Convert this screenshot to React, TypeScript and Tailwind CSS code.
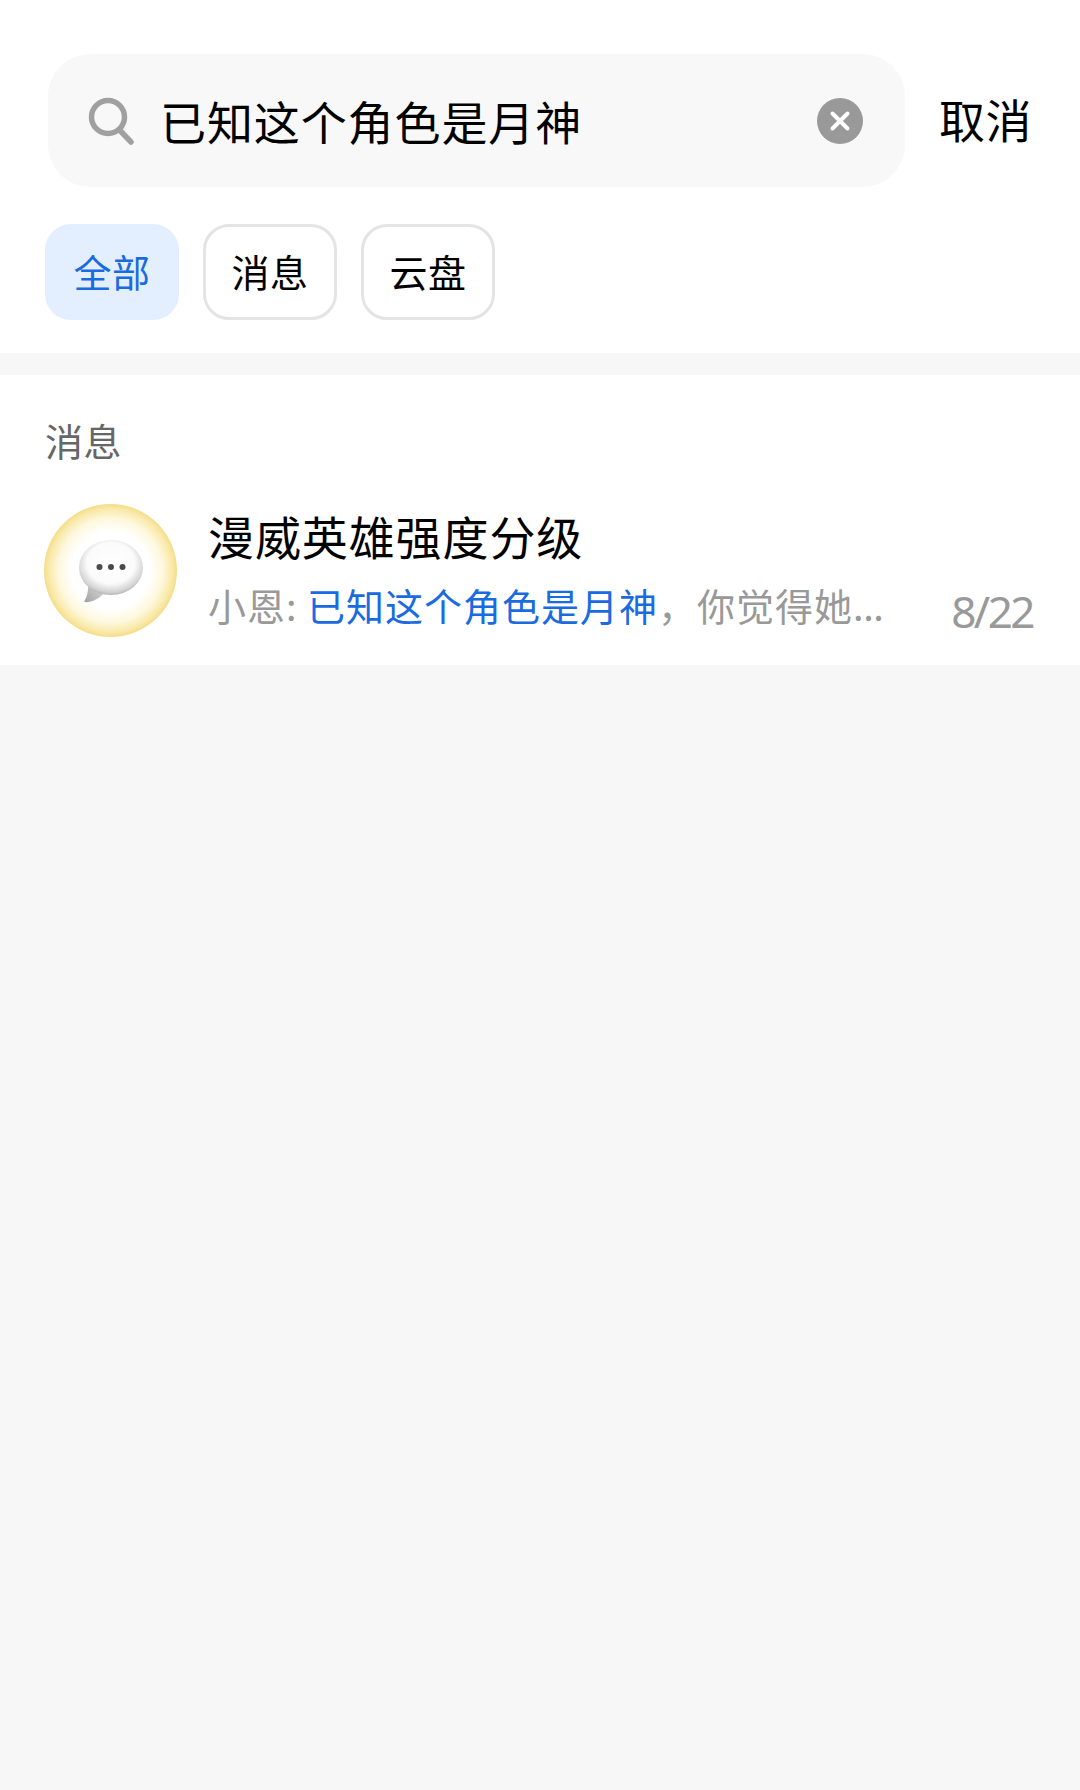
const font = { fontFamily: '"Noto Sans CJK SC", "Noto Sans", sans-serif' };

function Chip({ label, active }: { label: string; active?: boolean }) {
  return (
    <div
      className={
        active
          ? "flex h-[96px] w-[134px] items-center justify-center rounded-[26px] bg-[#e3eefe] text-[38px] leading-none tracking-[0.5px] text-[#1a6ae0]"
          : "flex h-[96px] w-[134px] items-center justify-center rounded-[26px] border-[3px] border-[#e4e4e4] bg-white text-[38px] leading-none tracking-[0.5px] text-black"
      }
    >
      <span className="-mt-[2px]">{label}</span>
    </div>
  );
}

function SearchIcon() {
  return (
    <svg width="46" height="48" viewBox="0 0 46 48" fill="none" className="shrink-0">
      <circle cx="20" cy="20" r="16.5" stroke="#a0a0a0" strokeWidth="5.5" />
      <path d="M31.5 33 L43 45" stroke="#a0a0a0" strokeWidth="5.5" strokeLinecap="round" />
    </svg>
  );
}

function ClearIcon() {
  return (
    <svg width="46" height="46" viewBox="0 0 46 46" className="shrink-0">
      <circle cx="23" cy="23" r="23" fill="#999999" />
      <path d="M15.5 15.5 L30.5 30.5 M30.5 15.5 L15.5 30.5" stroke="#ffffff" strokeWidth="4" strokeLinecap="round" />
    </svg>
  );
}

function Bubble() {
  return (
    <svg width="66" height="66" viewBox="0 0 66 66">
      <defs>
        <radialGradient id="bubbleFill" cx="50%" cy="42%" r="62%">
          <stop offset="0%" stopColor="#ffffff" />
          <stop offset="60%" stopColor="#fbfbfb" />
          <stop offset="85%" stopColor="#d2d2d2" />
          <stop offset="100%" stopColor="#9f9f9f" />
        </radialGradient>
        <linearGradient id="tailFill" x1="0" y1="1" x2="1" y2="0">
          <stop offset="0%" stopColor="#a0a0a0" />
          <stop offset="100%" stopColor="#e2e2e2" />
        </linearGradient>
      </defs>
      <path d="M10 43 C11 52 9 59 6 64 C13 65 21 61 26 55 Z" fill="url(#tailFill)" />
      <ellipse cx="33" cy="29.5" rx="32" ry="27.5" fill="url(#bubbleFill)" />
      <circle cx="21.5" cy="29" r="3" fill="#4a4a4a" />
      <circle cx="33" cy="29" r="3" fill="#4a4a4a" />
      <circle cx="44.5" cy="29" r="3" fill="#4a4a4a" />
    </svg>
  );
}

export default function App() {
  return (
    <div className="flex h-[1790px] w-[1080px] flex-col bg-[#f7f7f7]" style={font}>
      <header className="h-[353px] bg-white pt-[54px]">
        <div className="flex items-center pl-[48px]">
          <div className="flex h-[133px] w-[857px] items-center rounded-[42px] bg-[#f8f8f8] pl-[40px] pr-[42px]">
            <SearchIcon />
            <span className="ml-[26px] -mt-[2px] flex-1 text-[46px] leading-none tracking-[0.9px] text-black">已知这个角色是月神</span>
            <ClearIcon />
          </div>
          <span className="ml-[34px] -mt-[6px] text-[46px] leading-none tracking-[0.5px] text-black">取消</span>
        </div>
        <div className="mt-[37px] flex gap-[24px] pl-[45px]">
          <Chip label="全部" active />
          <Chip label="消息" />
          <Chip label="云盘" />
        </div>
      </header>
      <section className="mt-[22px] h-[290px] bg-white px-[45px]">
        <div className="pt-[44px] text-[38px] leading-[42px] tracking-[0.5px] text-[#666666]">消息</div>
        <div className="mt-[43px] flex items-start">
          <div className="-ml-[1px] flex h-[133px] w-[133px] shrink-0 items-center justify-center rounded-full bg-[radial-gradient(circle_closest-side,#ffffff_0%,#ffffff_58%,#fef8de_78%,#f9e9a8_93%,#f5dc88_100%)]">
            <Bubble />
          </div>
          <div className="ml-[31px] min-w-0 flex-1">
            <div className="mt-[4px] text-[46px] leading-[54px] tracking-[0.9px] text-black">漫威英雄强度分级</div>
            <div className="mt-[20px] flex items-start justify-between">
              <div className="whitespace-nowrap text-[38px] leading-[46px] tracking-[1px] text-[#999999]">
                小恩: <span className="text-[#1a6ae0]">已知这个角色是月神</span>，你觉得她<span className="tracking-[-0.5px]">...</span>
              </div>
              <div className="mr-[2px] mt-[6px] text-[44px] leading-[46px] tracking-[-2.5px] text-[#999999]" style={{ fontFamily: '"Noto Sans", sans-serif' }}>8/22</div>
            </div>
          </div>
        </div>
      </section>
    </div>
  );
}
